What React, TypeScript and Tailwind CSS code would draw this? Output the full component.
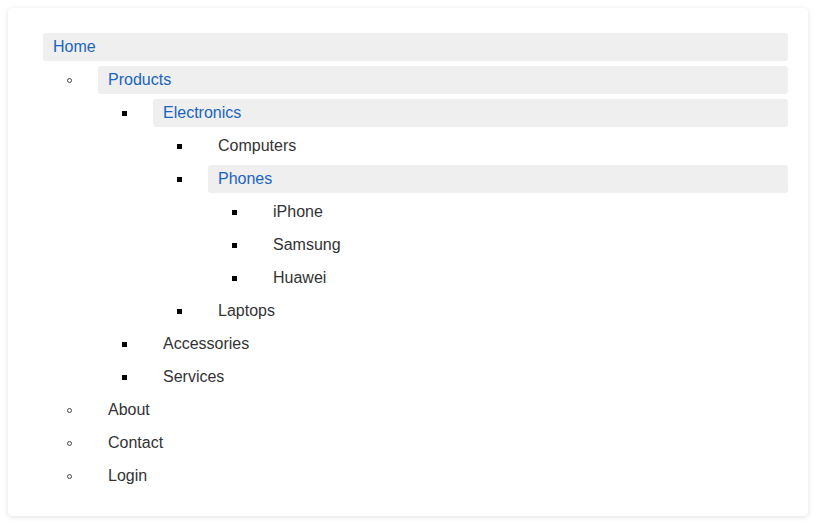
type Item = { label: string; active?: boolean; children?: Item[] };

const tree: Item = {
  label: "Home",
  active: true,
  children: [
    {
      label: "Products",
      active: true,
      children: [
        {
          label: "Electronics",
          active: true,
          children: [
            { label: "Computers" },
            {
              label: "Phones",
              active: true,
              children: [{ label: "iPhone" }, { label: "Samsung" }, { label: "Huawei" }],
            },
            { label: "Laptops" },
          ],
        },
        { label: "Accessories" },
        { label: "Services" },
      ],
    },
    { label: "About" },
    { label: "Contact" },
    { label: "Login" },
  ],
};

function Marker({ depth }: { depth: number }) {
  return (
    <div className="flex w-[55px] shrink-0 items-center pl-[24px]">
      {depth === 1 ? (
        <span className="block h-[5px] w-[5px] rounded-full border border-[#444]" />
      ) : (
        <span className="block h-[5px] w-[5px] bg-black" />
      )}
    </div>
  );
}

function Node({ item, depth }: { item: Item; depth: number }) {
  return (
    <li className="flex flex-col gap-[5px]">
      <div className="flex h-[28px] items-center">
        {depth > 0 ? <Marker depth={depth} /> : null}
        <a
          className={`flex h-full flex-1 items-center rounded-[3px] px-[10px] ${
            item.active ? "bg-[#efefef] text-[#1a64c0]" : "text-[#333]"
          }`}
        >
          {item.label}
        </a>
      </div>
      {item.children ? (
        <ul className={`flex flex-col gap-[5px] ${depth > 0 ? "pl-[55px]" : ""}`}>
          {item.children.map((c) => (
            <Node key={c.label} item={c} depth={depth + 1} />
          ))}
        </ul>
      ) : null}
    </li>
  );
}

export default function App() {
  return (
    <div className="min-h-screen bg-white p-[8px] font-['Liberation_Sans',Arial,sans-serif] text-[16px]">
      <div className="h-[508px] w-[800px] rounded-[4px] bg-white pl-[35px] pr-[20px] pt-[25px] shadow-[0_1px_5px_rgba(0,0,0,0.12)]">
        <ul className="flex flex-col">
          <Node item={tree} depth={0} />
        </ul>
      </div>
    </div>
  );
}
